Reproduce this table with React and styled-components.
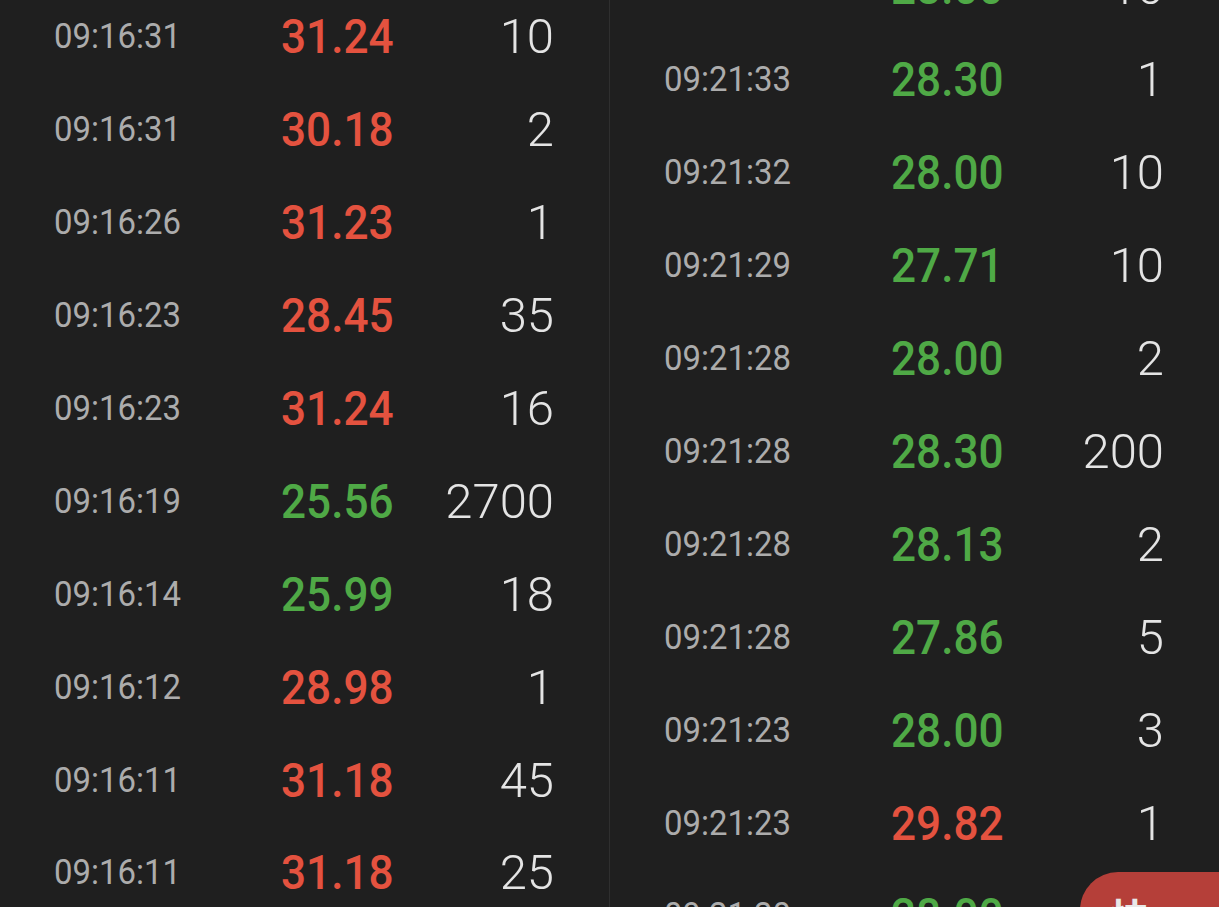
import React from 'react';
import styled, { createGlobalStyle } from 'styled-components';

const GlobalStyle = createGlobalStyle`
    html, body {
        margin: 0;
        padding: 0;
        background: #1f1f1f;
    }
`;

const ROW_HEIGHT = 92.9;

const left = [
    ['09:16:31', '31.24', '10', 'up'],
    ['09:16:31', '30.18', '2', 'up'],
    ['09:16:26', '31.23', '1', 'up'],
    ['09:16:23', '28.45', '35', 'up'],
    ['09:16:23', '31.24', '16', 'up'],
    ['09:16:19', '25.56', '2700', 'down'],
    ['09:16:14', '25.99', '18', 'down'],
    ['09:16:12', '28.98', '1', 'up'],
    ['09:16:11', '31.18', '45', 'up'],
    ['09:16:11', '31.18', '25', 'up'],
];

const right = [
    ['09:21:34', '28.00', '10', 'down'],
    ['09:21:33', '28.30', '1', 'down'],
    ['09:21:32', '28.00', '10', 'down'],
    ['09:21:29', '27.71', '10', 'down'],
    ['09:21:28', '28.00', '2', 'down'],
    ['09:21:28', '28.30', '200', 'down'],
    ['09:21:28', '28.13', '2', 'down'],
    ['09:21:28', '27.86', '5', 'down'],
    ['09:21:23', '28.00', '3', 'down'],
    ['09:21:23', '29.82', '1', 'up'],
    ['09:21:20', '28.00', '6', 'down'],
];

const Page = styled.div`
    position: relative;
    height: 907px;
    overflow: hidden;
    display: grid;
    grid-template-columns: 609px 1px 609px;
    background: #1f1f1f;
    font-family: Roboto, "Noto Sans", sans-serif;
`;

const Divider = styled.div`
    background: #2f2f2f;
`;

const Panel = styled.div`
    display: flex;
    flex-direction: column;
    margin-top: ${p => p.$offset}px;
`;

const Row = styled.div`
    flex: none;
    height: ${ROW_HEIGHT}px;
    display: grid;
    grid-template-columns: 227px 1fr auto;
    align-items: center;
    padding: 0 55px 0 54px;
`;

// the app font is a narrow DIN-like face, so Roboto gets squeezed a little
const Time = styled.span`
    display: inline-block;
    font-size: 35px;
    font-weight: 400;
    color: #acacac;
    transform: scaleX(0.94);
    transform-origin: left center;
`;

const Price = styled.span`
    display: inline-block;
    font-size: 49px;
    font-weight: 500;
    color: ${p => (p.$dir === 'up' ? '#e4523f' : '#4fa946')};
    transform: scaleX(0.9);
    transform-origin: left center;
`;

const Qty = styled.span`
    font-size: 49px;
    font-weight: 300;
    color: #e4e4e4;
    text-align: right;
`;

const OrderButton = styled.div`
    position: absolute;
    left: 1080px;
    top: 872px;
    width: 160px;
    height: 80px;
    border-top-left-radius: 38px;
    background: #b53f39;
    padding: 24px 0 0 30px;
    box-sizing: border-box;
    font-family: "Noto Sans CJK SC", sans-serif;
    font-size: 40px;
    font-weight: 700;
    line-height: 1;
    color: #e8e8e8;
`;

const TradeList = ({ rows, offset }) => (
    <Panel $offset={offset}>
        {rows.map(([time, price, qty, dir], i) => (
            <Row key={i}>
                <Time>{time}</Time>
                <Price $dir={dir}>{price}</Price>
                <Qty>{qty}</Qty>
            </Row>
        ))}
    </Panel>
);

export default function App() {
    return (
        <>
            <GlobalStyle />
            <Page>
                <TradeList rows={left} offset={-9.5} />
                <Divider />
                <TradeList rows={right} offset={-59.4} />
                <OrderButton>快</OrderButton>
            </Page>
        </>
    );
}
